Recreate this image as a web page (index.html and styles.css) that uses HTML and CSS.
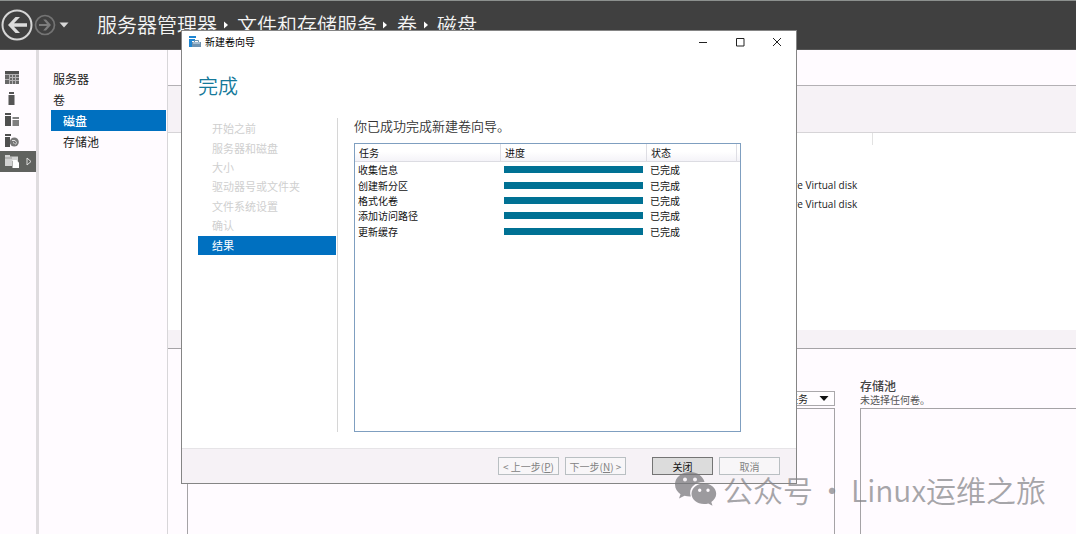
FILE: index.html
```html
<!DOCTYPE html>
<html lang="zh-CN">
<head>
<meta charset="utf-8">
<title>服务器管理器</title>
<link rel="stylesheet" href="styles.css">
</head>
<body>
<div class="app">
  <header class="topbar">
    <button class="round-btn" aria-label="后退">
      <svg width="32" height="32" viewBox="0 0 32 32"><circle cx="16" cy="16" r="14.5" fill="none" stroke="#d6d6d6" stroke-width="2"/><path d="M7 16 14.500 8H19l-6 6.300H26v3.400H13l6 6.300h-4.500z" fill="#dcdcdc"/></svg>
    </button>
    <button class="round-btn" aria-label="前进">
      <svg width="22" height="22" viewBox="0 0 22 22"><circle cx="11" cy="11" r="9.500" fill="none" stroke="#747474" stroke-width="1.700"/><path d="M17 11 12 5.500H9.200L13 10H5v2h8l-3.800 4.500H12z" fill="#7c7c7c"/></svg>
    </button>
    <button class="round-btn history" aria-label="历史记录">
      <svg width="10" height="6" viewBox="0 0 10 6"><path d="M0.500 0.500h9L5 5.500z" fill="#d8d8d8"/></svg>
    </button>
    <nav class="crumbs">
      <span>服务器管理器</span>
      <svg width="20" height="10" viewBox="0 0 20 10"><path d="M7 1.500v7L11 5z" fill="#fff"/></svg>
      <span>文件和存储服务</span>
      <svg width="20" height="10" viewBox="0 0 20 10"><path d="M6 1.500v7L10 5z" fill="#fff"/></svg>
      <span>卷</span>
      <svg width="20" height="10" viewBox="0 0 20 10"><path d="M7 1.500v7L11 5z" fill="#fff"/></svg>
      <span>磁盘</span>
    </nav>
  </header>

  <div class="workspace">
    <nav class="rail" aria-label="主导航">
      <button class="rail-item" aria-label="仪表板">
        <svg width="14" height="13" viewBox="0 0 14 13"><path d="M0 0h14v3H0z" fill="#505050"/><path d="M0 3h14v10H0z" fill="#b4b2b4"/><path d="M0 4h4v4H0zM0 9h4v4H0zM5 4h2v2H5zM8 4h2v2H8zM11 4h3v2h-3zM5 7h2v2H5zM8 7h2v2H8zM11 7h3v2h-3zM5 10h2v3H5zM8 10h2v3H8zM11 10h3v3h-3z" fill="#686868"/></svg>
      </button>
      <button class="rail-item" aria-label="本地服务器">
        <svg width="14" height="13" viewBox="0 0 14 13"><path d="M4 0h5v2H4zM3.500 3h6v10h-6z" fill="#555"/></svg>
      </button>
      <button class="rail-item" aria-label="所有服务器">
        <svg width="14" height="13" viewBox="0 0 14 13"><path d="M0 0h6v2H0zM0 3h6v10H0z" fill="#4f4f4f"/><path d="M7.500 4H14v2H7.500zM7.500 7H14v6H7.500z" fill="#808080"/></svg>
      </button>
      <button class="rail-item" aria-label="服务">
        <svg width="14" height="13" viewBox="0 0 14 13"><path d="M0 0h6v2H0zM0 3h5v10H0z" fill="#4f4f4f"/><circle cx="9.300" cy="8" r="4.500" fill="#777"/><path d="M7 6.500h3l1.500 2-1 2M8 8.500l1.500 1" fill="none" stroke="#ddd"/></svg>
      </button>
      <button class="rail-item active" aria-label="文件和存储服务">
        <svg width="14" height="13" viewBox="0 0 14 13"><path d="M0 0h5v1.500h8V6H0zM0 4h7v7H0z" fill="#d2d2d2"/><path d="M0 3h7" stroke="#999"/><path d="M7.500 5h4L14 7.500V13H7.500z" fill="#fff"/></svg>
        <svg width="6" height="9" viewBox="0 0 6 9"><path d="M1 1v7l4-3.500z" fill="none" stroke="#ddd"/></svg>
      </button>
    </nav>

    <nav class="side">
      <a href="#">服务器</a>
      <a href="#">卷</a>
      <a href="#" class="child selected">磁盘</a>
      <a href="#" class="child">存储池</a>
    </nav>

    <main class="content">
      <section class="disks">
        <div class="disks-toolbar"></div>
        <div class="disks-list">
          <div class="col-tick"></div>
          <div class="disk-row">VMware Virtual disk</div>
          <div class="disk-row">VMware Virtual disk</div>
        </div>
        <div class="disks-foot"></div>
      </section>
      <section class="lower">
        <div class="panel volumes">
          <div class="panel-head">
            <div class="task-select">
              <select aria-label="任务"><option>任务</option></select>
              <svg width="10" height="5" viewBox="0 0 10 5"><path d="M0.500 0h9L5 5z" fill="#111"/></svg>
            </div>
          </div>
          <div class="panel-box"></div>
        </div>
        <div class="panel pool">
          <div class="panel-head">
            <h2>存储池</h2>
            <p>未选择任何卷。</p>
          </div>
          <div class="panel-box"></div>
        </div>
      </section>
    </main>
  </div>

  <div class="dialog" role="dialog" aria-labelledby="dlg-title">
    <div class="titlebar">
      <svg width="12" height="12" viewBox="0 0 12 12"><path d="M0 0h7v2H0zM0 3h6v2H3v6H0z" fill="#1f86d2"/><path d="M3 6h9v5H3z" fill="#6f93b2"/><path d="M5.500 6V4.500h4V6M3 8.500h9" fill="none" stroke="#7193ae"/><path d="M4 7h7" stroke="#d5e3ee"/></svg>
      <span id="dlg-title" class="dlg-title">新建卷向导</span>
      <button aria-label="最小化"><svg width="10" height="10" viewBox="0 0 10 10"><path d="M1 5.500h8" stroke="#222"/></svg></button>
      <button aria-label="最大化"><svg width="10" height="10" viewBox="0 0 10 10"><path d="M1.500 1.500h7.500v7.500H1.500z" fill="none" stroke="#222"/></svg></button>
      <button aria-label="关闭窗口"><svg width="10" height="10" viewBox="0 0 10 10"><path d="M1 1l8 8M9 1L1 9" stroke="#222"/></svg></button>
    </div>
    <h1>完成</h1>
    <div class="dlg-body">
      <ol class="steps">
        <li>开始之前</li>
        <li>服务器和磁盘</li>
        <li>大小</li>
        <li>驱动器号或文件夹</li>
        <li>文件系统设置</li>
        <li>确认</li>
        <li class="current">结果</li>
      </ol>
      <div class="result">
        <p>你已成功完成新建卷向导。</p>
        <div class="table-box">
          <table>
            <colgroup><col class="c-task"><col class="c-progress"><col class="c-state"><col></colgroup>
            <thead><tr><th>任务</th><th>进度</th><th>状态</th><td></td></tr></thead>
            <tbody>
              <tr><td>收集信息</td><td><div class="bar"></div></td><td>已完成</td><td></td></tr>
              <tr><td>创建新分区</td><td><div class="bar"></div></td><td>已完成</td><td></td></tr>
              <tr><td>格式化卷</td><td><div class="bar"></div></td><td>已完成</td><td></td></tr>
              <tr><td>添加访问路径</td><td><div class="bar"></div></td><td>已完成</td><td></td></tr>
              <tr><td>更新缓存</td><td><div class="bar"></div></td><td>已完成</td><td></td></tr>
            </tbody>
          </table>
        </div>
      </div>
    </div>
    <footer class="dlg-foot">
      <button class="btn" disabled>&lt; 上一步(<u>P</u>)</button>
      <button class="btn" disabled>下一步(<u>N</u>) &gt;</button>
      <button class="btn primary">关闭</button>
      <button class="btn" disabled>取消</button>
    </footer>
  </div>

  <div class="watermark">
    <svg width="42" height="34" viewBox="0 0 42 34"><path fill-rule="evenodd" d="M15 0C6.500 0 0 5.500 0 12.500c0 4 2.200 7.400 5.500 9.700L4 26.500l5.500-2.800c2 .6 4 .9 6.300.8C13 16 20 9.500 29.500 10 28 4 22 0 15 0zM10 5.500a2 2 0 1 1 0 4 2 2 0 0 1 0-4zm10 0a2 2 0 1 1 0 4 2 2 0 0 1 0-4z"/><path fill-rule="evenodd" d="M29 11.500c-7 0-12.500 4.600-12.500 10.300S22 32 29 32c1.500 0 3-.2 4.300-.6l4.200 2.300-1.200-3.700c3-2 4.900-4.900 4.900-8.200 0-5.700-5.400-10.300-12.200-10.300zM24.700 16.500a1.700 1.700 0 1 1 0 3.400 1.700 1.700 0 0 1 0-3.400zm8.300 0a1.700 1.700 0 1 1 0 3.400 1.700 1.700 0 0 1 0-3.400z"/></svg>
    <span>公众号</span><span class="dot">·</span><span>Linux运维之旅</span>
  </div>
</div>
</body>
</html>
```
FILE: styles.css
```css
* { box-sizing: border-box; }
body {
  margin: 0;
  background: #fff;
  color: #222;
  font-family: "Noto Sans CJK SC", "Noto Sans", sans-serif;
  font-size: 12px;
}
button { font: inherit; color: inherit; border: 0; padding: 0; background: none; }
h1, h2, p, ol { margin: 0; padding: 0; font-weight: 400; }
svg { display: block; flex: none; }

.app {
  position: relative;
  display: flex;
  flex-direction: column;
  height: 100vh;
  padding-right: 4px;
  overflow: hidden;
}

.topbar {
  display: flex;
  align-items: center;
  flex: none;
  height: 50px;
  padding-left: 1px;
  background: #404040;
  border-top: 1px solid #8c908e;
  border-bottom: 1px solid #555;
}
.round-btn { margin-right: 1px; }
.history { margin-left: 2px; }
.crumbs {
  display: flex;
  align-items: center;
  margin-left: 27px;
  color: #f4f4f4;
  font-size: 20px;
  font-weight: 350;
  line-height: 28px;
}

.workspace { display: flex; flex: 1; min-height: 0; background: #fffbff; }

.rail {
  flex: none;
  width: 39px;
  padding-top: 17px;
  border-right: 3px solid #dfdcdf;
}
.rail-item {
  display: flex;
  align-items: center;
  justify-content: space-between;
  width: 100%;
  height: 21px;
  padding: 0 4px 0 5px;
}
.rail-item.active { background: #60625f; }

.side {
  display: flex;
  flex-direction: column;
  flex: none;
  width: 129px;
  padding: 18px 1px 0 12px;
  border-right: 1px solid #d8d6d9;
}
.side a {
  height: 21px;
  padding-left: 2px;
  color: #222;
  line-height: 21px;
  text-decoration: none;
}
.side .child { padding-left: 12px; }
.side .selected { background: #0070c0; color: #fff; font-weight: 500; }

.content { display: flex; flex-direction: column; flex: 1; min-width: 0; padding-top: 35px; }
.disks { border-top: 1px solid #b3b0b4; border-bottom: 1px solid #a5a3a6; }
.disks-toolbar { height: 47px; background: #f6f2f6; border-bottom: 1px solid #d6d4d7; }
.disks-list { height: 197px; padding-left: 597px; background: #fff; }
.col-tick {
  width: 108px;
  height: 12px;
  margin-bottom: 30px;
  border-right: 1px solid #e2e2e2;
}
.disk-row {
  height: 19px;
  font-family: "Open Sans", "Noto Sans", sans-serif;
  font-size: 10px;
  line-height: 20px;
}
.disks-foot { height: 18px; background: #f6f2f6; }

.lower { display: flex; flex: 1; gap: 25px; padding: 30px 0 0 19px; }
.panel { display: flex; flex-direction: column; }
.volumes { flex: 3 1 0; }
.pool { flex: 1 1 0; }
.panel-head { display: flex; flex-direction: column; height: 29px; }
.panel h2 { color: #444; font-size: 12px; font-weight: 500; line-height: 14px; }
.panel p { color: #555; font-size: 10px; line-height: 13px; }
.panel-box { flex: 1; border: 1px solid #a5a3a6; border-bottom: 0; }
.pool .panel-box { border-right: 0; }
.task-select {
  display: grid;
  align-items: center;
  width: 60px;
  height: 15px;
  margin: 12px 0 0 auto;
  border: 1px solid #aaa8ab;
  background: #fffdff;
}
.task-select > * { grid-area: 1 / 1; }
.task-select svg { justify-self: end; margin-right: 5px; pointer-events: none; }
.task-select select {
  width: 100%;
  height: 13px;
  padding: 0 0 0 12px;
  border: 0;
  appearance: none;
  background: none;
  color: #222;
  font: inherit;
  font-size: 10px;
  line-height: 13px;
}

.dialog {
  position: absolute;
  top: 30px;
  left: 181px;
  display: flex;
  flex-direction: column;
  width: 616px;
  border: 1px solid #858585;
  background: #fff;
}
.titlebar { display: flex; align-items: center; height: 22px; padding: 0 14px 0 7px; gap: 27px; }
.dlg-title { flex: 1; margin-left: -23px; color: #000; font-size: 10px; line-height: 22px; }
.dialog h1 { padding: 17px 16px 0; color: #15799a; font-size: 20px; font-weight: 350; line-height: 32px; }
.dlg-body { display: flex; height: 346px; padding: 16px 55px 16px 16px; }
.steps {
  display: grid;
  grid-auto-rows: 1fr;
  flex: none;
  width: 140px;
  padding: 1px 1px 177px 0;
  border-right: 1px solid #d6d6d6;
  list-style: none;
  color: #cfcfcf;
  font-size: 11px;
}
.steps li { display: flex; align-items: center; padding-left: 14px; line-height: 19px; }
.steps .current { background: #0070c0; color: #fff; }
.result { display: flex; flex-direction: column; flex: 1; margin-left: 16px; }
.result p { height: 25px; color: #333; font-size: 13px; font-weight: 350; line-height: 16px; }
.table-box { flex: 1; border: 1px solid #7f9fc0; }
table { width: 100%; height: 95px; border-collapse: separate; border-spacing: 0; table-layout: fixed; font-size: 10px; line-height: 15px; }
.c-task, .c-progress { width: 146px; }
.c-state { width: 90px; }
th, td { padding: 0 4px 0 3px; text-align: left; font-weight: 400; color: #111; }
thead th, thead td {
  height: 18px;
  padding-left: 4px;
  background: linear-gradient(#fff 45%, #f4f3f8);
  border-right: 1px solid #dedee4;
  border-bottom: 1px solid #dcdce2;
}
thead td { border-right: 0; }
.bar { height: 7px; background: #007194; }

.dlg-foot {
  display: flex;
  gap: 6px;
  height: 35px;
  padding: 8px 16px 0;
  justify-content: flex-end;
  background: #f6f2f6;
  border-top: 1px solid #e6e4e7;
}
.btn {
  width: 61px;
  height: 18px;
  border: 1px solid #b9bfc2;
  background: #f8f6f8;
  color: #828282;
  font-size: 10px;
  line-height: 15px;
  white-space: nowrap;
}
.btn.primary { margin-left: 20px; border-color: #747474; background: #dcdcdc; color: #111; }

.watermark {
  position: absolute;
  right: 34px;
  bottom: 24px;
  display: flex;
  align-items: center;
  color: #858488;
  font-size: 30px;
  font-weight: 350;
  line-height: 42px;
  opacity: .72;
  pointer-events: none;
}
.watermark svg { margin-right: 6px; fill: #77767a; }
.watermark .dot { width: 38px; text-align: center; }
```
